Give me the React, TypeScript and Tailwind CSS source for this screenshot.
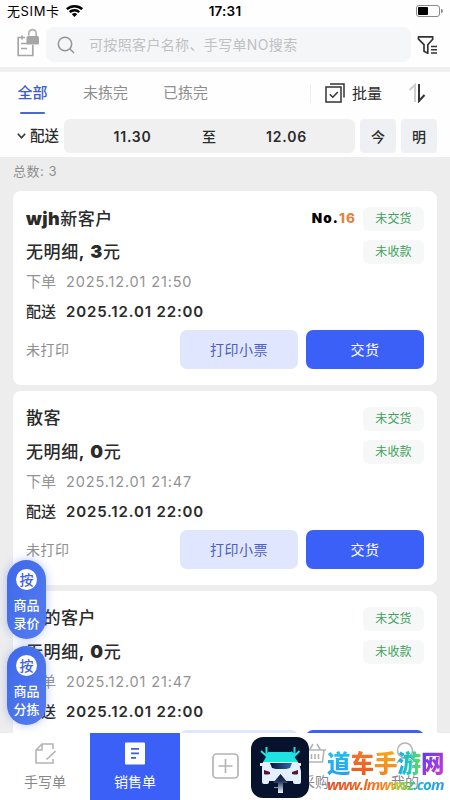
import { ReactNode } from "react";
import clsx from "clsx";

interface Order {
  name: string;
  no?: string;
  amount: number;
  created: string;
  delivery: string;
}

const orders: Order[] = [
  {
    name: "wjh新客户",
    no: "16",
    amount: 3,
    created: "2025.12.01 21:50",
    delivery: "2025.12.01 22:00",
  },
  {
    name: "散客",
    amount: 0,
    created: "2025.12.01 21:47",
    delivery: "2025.12.01 22:00",
  },
  {
    name: "我的客户",
    amount: 0,
    created: "2025.12.01 21:47",
    delivery: "2025.12.01 22:00",
  },
];

const StatusBar = () => (
  <div className="grid h-[22px] shrink-0 grid-cols-3 items-center pr-[7px] pl-[7px] text-black">
    <div className="flex items-center gap-[6px] text-[13px] whitespace-nowrap">
      <span className="pt-[1px] tracking-[0.6px]">无SIM卡</span>
      <svg className="h-[12px] w-[17px]" viewBox="0 0 17 12" fill="currentColor">
        <path d="M8.5 0C5.300 0 2.300 1.200 0 3.300l1.700 1.800a10 10 0 0 1 13.600 0L17 3.300A12.500 12.500 0 0 0 8.500 0z" />
        <path d="M8.500 4.100c-2.100 0-4.100.8-5.600 2.200l1.700 1.800a5.700 5.700 0 0 1 7.800 0l1.700-1.800a8.200 8.200 0 0 0-5.600-2.200z" />
        <path d="M8.500 8.100c-1 0-2 .4-2.700 1.100l2.700 2.800 2.700-2.800c-.7-.7-1.700-1.100-2.700-1.100z" />
      </svg>
    </div>
    <div className="text-center text-[13.500px] font-semibold tracking-[0.2px]">
      17:31
    </div>
    <div className="flex items-center justify-end gap-px">
      <div className="h-[12px] w-[24px] rounded-[3px] border border-[#8a8a8a] p-px">
        <div className="h-full w-[10px] rounded-[1px] bg-black" />
      </div>
      <div className="h-[4px] w-[1.500px] rounded-r bg-[#8a8a8a]" />
    </div>
  </div>
);

const SearchRow = () => (
  <div className="flex h-[45px] shrink-0 items-center pl-[16px]">
    <svg className="-mt-[4px] h-[30px] w-[24px] shrink-0" viewBox="0 0 24 30" fill="none">
      <path
        d="M9 9.500H2.200v18h14.600V17M6 7.500v4M5 15.500h8M5 20.500h6"
        stroke="#a6a6a6"
        strokeWidth="1.700"
      />
      <path
        d="M12.800 7.500V5.300a3.700 3.700 0 0 1 7.400 0v3"
        stroke="#b0b0b0"
        strokeWidth="1.600"
      />
      <rect x="10.500" y="8" width="12.500" height="8.500" rx="1.500" fill="#a6a6a6" />
    </svg>
    <div className="ml-[6px] flex h-[35px] w-[365px] items-center rounded-[8px] bg-[#f5f6f8] pl-[11px]">
      <svg className="h-[18px] w-[18px]" viewBox="0 0 18 18" fill="none" stroke="#969696" strokeWidth="1.500">
        <circle cx="8" cy="8" r="6.700" />
        <path d="m12.800 12.800 4.200 4.200" />
      </svg>
      <span className="ml-[14px] text-[14px] tracking-[0.350px] text-[#bfc0c2]">
        可按照客户名称、手写单NO搜索
      </span>
    </div>
    <svg className="ml-[6px] h-[20px] w-[21px]" viewBox="0 0 21 20" fill="none" stroke="#333" strokeWidth="1.700">
      <path
        d="M1.500 1.800h14.200v2.400l-4.900 5.500v8.500l-3.800-2V9.700L1.500 4.200z"
        strokeLinejoin="round"
      />
      <path d="M14 11.500h6M14 14.800h6M14 18h6" strokeWidth="1.500" />
    </svg>
  </div>
);

const Tabs = () => (
  <div className="flex h-[45px] shrink-0 pl-[18px] text-[15px] leading-[22px]">
    <div className="flex w-[29px] flex-col items-center pt-[10px] font-medium whitespace-nowrap text-[#3a5bd9]">
      全部
      <div className="mt-[8px] h-[2px] w-[25px] rounded-full bg-[#4a67d6]" />
    </div>
    <div className="ml-[36px] pt-[10px] text-[#8e8e8e]">未拣完</div>
    <div className="ml-[35px] pt-[10px] text-[#8e8e8e]">已拣完</div>
    <div className="mt-[12px] ml-[102px] h-[19px] w-px bg-[#eeeeee]" />
    <svg className="mt-[11px] ml-[14px] h-[20px] w-[20px]" viewBox="0 0 20 20" fill="none" stroke="#333" strokeWidth="1.500">
      <rect x="1" y="4" width="15" height="15" />
      <path d="M5 1h14v13.500M4.800 11.200l3 3 5-5.200" />
    </svg>
    <div className="ml-[7px] pt-[11px] text-[#2b2b2b]">批量</div>
    <svg className="mt-[11px] ml-[26px] h-[20px] w-[18px]" viewBox="0 0 18 20" fill="none">
      <path d="M7 19V2L1.500 7" stroke="#cdcdcd" strokeWidth="2" />
      <path d="M11 1v17l5.500-6" stroke="#333" strokeWidth="2" />
    </svg>
  </div>
);

const DateRow = () => (
  <div className="flex h-[40px] shrink-0 items-start pt-[2px] pl-[17px] text-[15px] text-[#2b2b2b]">
    <div className="flex h-[34px] w-[47px] items-center gap-[4px] text-[14.500px] font-medium whitespace-nowrap">
      <svg className="h-[6px] w-[9px] shrink-0" viewBox="0 0 9 6" fill="none" stroke="#333" strokeWidth="1.600">
        <path d="m.8.8 3.700 4 3.700-4" />
      </svg>
      配送
    </div>
    <div className="flex h-[34px] w-[291px] items-center rounded-[6px] bg-[#f0f0f0] text-[14px] font-semibold tracking-[0.8px]">
      <span className="w-[137px] text-center">11.30</span>
      <span className="w-[17px] text-center font-medium">至</span>
      <span className="w-[137px] text-center">12.06</span>
    </div>
    <div className="ml-[5px] grid h-[34px] w-[36px] place-items-center rounded-[4px] bg-[#eff0f3] text-[14px] font-medium">
      今
    </div>
    <div className="ml-[5px] grid h-[34px] w-[36px] place-items-center rounded-[4px] bg-[#eff0f3] text-[14px] font-medium">
      明
    </div>
  </div>
);

const Badge = ({ children }: { children: ReactNode }) => (
  <span className="grid h-[24px] w-[61px] place-items-center rounded-[6px] bg-[#f6f7f7] text-[12px] tracking-[0.2px] text-[#3da25c]">
    {children}
  </span>
);

const OrderCard = ({ order }: { order: Order }) => (
  <div className="h-[194px] shrink-0 rounded-[8px] bg-white pt-[11px] pr-[13px] pl-[13px] text-[#2b2b2b]">
    <div className="flex h-[33px] items-center">
      <span className="text-[17px] font-medium tracking-[0.5px]">
        {order.no ? (
          <>
            <b className="text-[18px] font-black">wjh</b>新客户
          </>
        ) : (
          order.name
        )}
      </span>
      <div className="ml-auto flex items-center gap-[7px]">
        {order.no && (
          <span className="text-[13.500px] font-black tracking-[1.1px] text-black">
            No.<span className="font-extrabold text-[#e0853f]">{order.no}</span>
          </span>
        )}
        <Badge>未交货</Badge>
      </div>
    </div>
    <div className="flex h-[33px] items-center justify-between">
      <span className="text-[17px] font-medium tracking-[0.6px]">
        无明细<b>,</b> <b className="text-[18px] font-black">{order.amount}</b>元
      </span>
      <Badge>未收款</Badge>
    </div>
    <div className="flex h-[28px] items-center gap-[10px] text-[15px] text-[#939393]">
      下单
      <span className="text-[14.500px] tracking-[0.850px]">{order.created}</span>
    </div>
    <div className="flex h-[33px] items-center gap-[10px] text-[15px] font-medium">
      配送
      <span className="font-semibold tracking-[0.850px]">{order.delivery}</span>
    </div>
    <div className="flex h-[40px] items-center gap-[8px] text-[14px] tracking-[0.5px]">
      <span className="mr-auto text-[#8e8e8e]">未打印</span>
      <button className="h-[39px] w-[118px] rounded-[7px] bg-[#e0e6fd] tracking-[0.5px] text-[#4a5fc0]">
        打印小票
      </button>
      <button className="h-[39px] w-[118px] rounded-[7px] bg-[#3a60f8] text-white">
        交货
      </button>
    </div>
  </div>
);

const FloatButton = ({ lines }: { lines: string[] }) => (
  <div className="flex h-[79px] w-[39px] flex-col items-center rounded-full bg-gradient-to-br from-[#3e68e8] to-[#557cf0] pt-[9px] text-[13px] leading-[18px] font-medium text-white shadow-[0_0_10px_rgba(74,108,245,0.4)]">
    <div className="mb-[6px] grid h-[21px] w-[21px] shrink-0 place-items-center rounded-full bg-white text-[14px] text-[#3f62df]">
      按
    </div>
    {lines.map((line) => (
      <span key={line}>{line}</span>
    ))}
  </div>
);

const NavItem = ({
  label,
  active,
  children,
}: {
  label?: string;
  active?: boolean;
  children: ReactNode;
}) => (
  <div
    className={clsx(
      "flex flex-1 flex-col items-center text-[14px]",
      label ? "pt-[9px]" : "pt-[20px]",
      active ? "bg-[#3a60f8] text-white" : "text-[#888]"
    )}
  >
    {children}
    {label && <span className="mt-[7px] leading-[20px]">{label}</span>}
  </div>
);

const BottomNav = () => (
  <div className="flex h-[67px] shrink-0 bg-white">
    <NavItem label="手写单">
      <svg className="h-[23px] w-[22px]" viewBox="0 0 22 23" fill="none" stroke="#b4b4b4" strokeWidth="1.600">
        <path d="M19 7V2H8L2 8v13h17v-4M2 8h6V2M12.500 17.500l9-8.500" />
      </svg>
    </NavItem>
    <NavItem label="销售单" active>
      <svg className="h-[23px] w-[20px]" viewBox="0 0 20 23">
        <rect width="20" height="22" y=".5" rx="1" fill="#fff" />
        <path d="M6 6.800h8M6 11.300h8M6 15.800h5" stroke="#3f5fd0" strokeWidth="1.800" />
      </svg>
    </NavItem>
    <NavItem>
      <svg className="h-[26px] w-[27px]" viewBox="0 0 27 26" fill="none" stroke="#b4b4b4" strokeWidth="1.700">
        <rect x="1" y="1" width="25" height="24" rx="3.500" />
        <path d="M13.500 6v14M6.500 13h14" />
      </svg>
    </NavItem>
    <NavItem label="采购">
      <svg className="h-[23px] w-[22px]" viewBox="0 0 22 23" fill="none" stroke="#b4b4b4" strokeWidth="1.600">
        <path d="M0 8h22M2 8l1.500 12h15L20 8M5.500 8l3.500-6M16.500 8 13 2M7.500 12v5M11 12v5M14.500 12v5" />
      </svg>
    </NavItem>
    <NavItem label="我的">
      <svg className="h-[23px] w-[22px]" viewBox="0 0 22 23" fill="none" stroke="#b4b4b4" strokeWidth="1.600">
        <circle cx="11" cy="8.500" r="7.500" />
        <path d="M3 21c2-3 5-5 8-5s6 2 8 5" />
      </svg>
    </NavItem>
  </div>
);

const SiteMark = () => (
  <div className="absolute top-[737px] left-[251px] flex">
    <svg className="h-[61px] w-[58px] shrink-0" viewBox="0 0 58 61">
      <defs>
        <linearGradient id="glass" x1="0" x2="1">
          <stop offset="0" stopColor="#07162f" />
          <stop offset="1" stopColor="#2f6cab" />
        </linearGradient>
        <linearGradient id="shaft" x1="0" x2="0" y1="0" y2="1">
          <stop offset="0" stopColor="#0b1836" />
          <stop offset=".4" stopColor="#26365c" />
          <stop offset="1" stopColor="#f4f8ff" />
        </linearGradient>
      </defs>
      <rect width="58" height="61" rx="12" fill="#07132d" />
      <path d="M18 15h22l7 10H12z" fill="#1de3e3" />
      <path
        d="M15.500 10v9M10 14l5.500 5 3-4M43.500 10v9M40 15l3.500 4 5-5"
        fill="none"
        stroke="#24dede"
        strokeWidth="2"
      />
      <path
        d="M12 25h35l2 5 1 4v11q0 2-2 2h-4q-2 0-2-2v-1H18v1q0 2-2 2h-3q-2 0-2-2V34l0-4zM9 26h4v3H9zM46 26h4v3h-4z"
        fill="#e4efff"
      />
      <path d="M19 26h22l-2 5-4 1H25l-4-1z" fill="url(#glass)" />
      <path d="m13 33 6 2v2q-4 1-6 0zM47 33l-6 2v2q4 1 6 0z" fill="#5a1626" />
      <path d="m29.500 37 7.500 9h-5v10h-5v-5h-4v-1h4v-4h-5z" fill="url(#shaft)" />
    </svg>
    <div className="ml-[18px] flex flex-col">
      <div className="mt-[10px] flex text-[23.500px] leading-[34px] font-black">
        <span className="w-[23.500px] bg-gradient-to-b from-[#20c8f0] to-[#2898ee] bg-clip-text whitespace-nowrap text-transparent">
          道
        </span>
        <span className="w-[23.500px] bg-gradient-to-b from-[#f08030] to-[#ee4c1c] bg-clip-text whitespace-nowrap text-transparent">
          车
        </span>
        <span className="w-[23.500px] bg-gradient-to-b from-[#f6ac18] to-[#f27c20] bg-clip-text whitespace-nowrap text-transparent">
          手
        </span>
        <span className="w-[23.500px] bg-gradient-to-r from-[#22a8e8] via-[#22c8b8] to-[#64dc40] bg-clip-text whitespace-nowrap text-transparent">
          游
        </span>
        <span className="w-[24px] bg-gradient-to-br from-[#4c38ee] via-[#9838e4] to-[#d838c8] bg-clip-text whitespace-nowrap text-transparent">
          网
        </span>
      </div>
      <span className="-mt-[7px] w-[118px] bg-[linear-gradient(90deg,#ee4820,#f46820_35%,#f49020_52%,#c0d030_59%,#70d030_69%,#22b8d8_75%,#2898ee)] bg-clip-text font-['Open_Sans'] text-[15px] leading-[20px] font-bold tracking-[-0.9px] whitespace-nowrap text-transparent italic">
        www.lmwwsz.com
      </span>
    </div>
  </div>
);

export default function App() {
  return (
    <div className="relative flex h-[800px] w-[450px] flex-col overflow-hidden bg-[#fefefe] font-['Inter','Noto_Sans_CJK_SC',sans-serif]">
      <StatusBar />
      <SearchRow />
      <div className="h-[5px] shrink-0 bg-[#efefef]" />
      <Tabs />
      <DateRow />
      <div className="flex min-h-0 flex-1 flex-col overflow-hidden bg-[#ededed] px-[13px]">
        <div className="h-[34px] shrink-0 pt-[4px] text-[13px] leading-[20px] tracking-[0.5px] text-[#8e8e8e]">
          总数: 3
        </div>
        <div className="flex flex-col gap-[6px]">
          {orders.map((order) => (
            <OrderCard key={order.name} order={order} />
          ))}
        </div>
      </div>
      <BottomNav />
      <div className="absolute top-[560px] left-[7px] flex flex-col gap-[7px]">
        <FloatButton lines={["商品", "录价"]} />
        <FloatButton lines={["商品", "分拣"]} />
      </div>
      <SiteMark />
    </div>
  );
}
